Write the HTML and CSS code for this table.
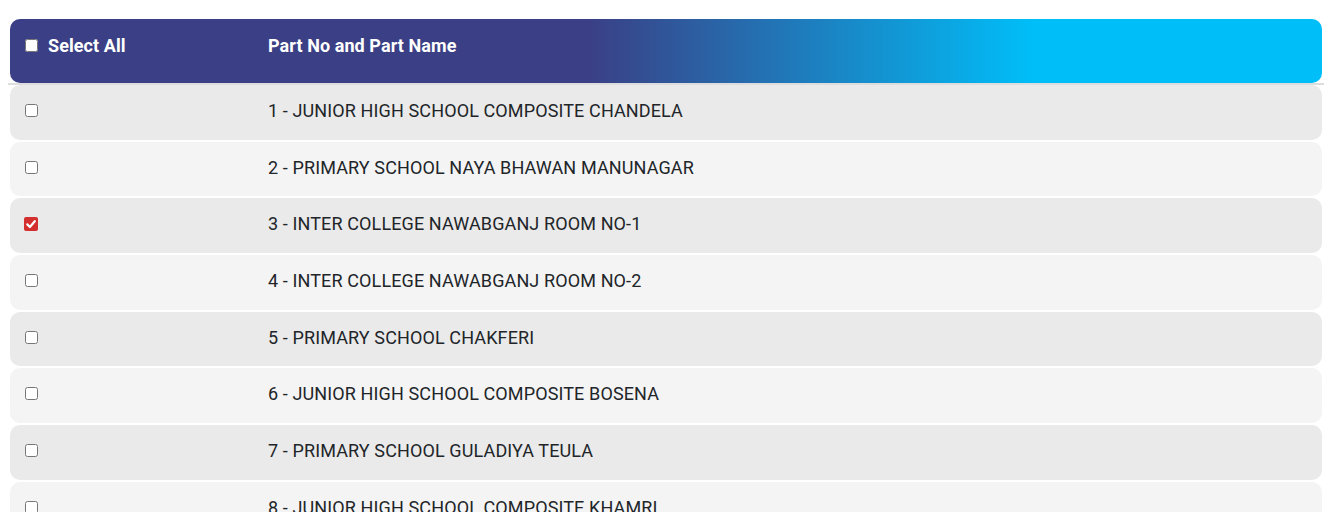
FILE: index.html
```html
<!DOCTYPE html>
<html lang="en">
<head>
<meta charset="utf-8">
<title>Parts</title>
<link rel="stylesheet" href="styles.css">
</head>
<body>
<div class="parts-table">
  <div class="row head">
    <div class="cell first"><label class="sel"><input type="checkbox" class="cb"> Select All</label></div>
    <div class="cell">Part No and Part Name</div>
  </div>
  <div class="divider"></div>
  <div class="rows">
    <div class="row odd"><div class="cell first"><input type="checkbox" class="cb"></div><div class="cell">1 - JUNIOR HIGH SCHOOL COMPOSITE CHANDELA</div></div>
    <div class="row even"><div class="cell first"><input type="checkbox" class="cb"></div><div class="cell">2 - PRIMARY SCHOOL NAYA BHAWAN MANUNAGAR</div></div>
    <div class="row odd"><div class="cell first"><span class="checked"><svg viewBox="0 0 14 14" width="14" height="14"><rect x="0" y="0" width="14" height="14" rx="2" fill="#d32f2f"/><path d="M3.3 7.4 L5.9 10 L10.8 4.2" fill="none" stroke="#fff" stroke-width="2.2" stroke-linecap="round" stroke-linejoin="round"/></svg></span></div><div class="cell">3 - INTER COLLEGE NAWABGANJ ROOM NO-1</div></div>
    <div class="row even"><div class="cell first"><input type="checkbox" class="cb"></div><div class="cell">4 - INTER COLLEGE NAWABGANJ ROOM NO-2</div></div>
    <div class="row odd"><div class="cell first"><input type="checkbox" class="cb"></div><div class="cell">5 - PRIMARY SCHOOL CHAKFERI</div></div>
    <div class="row even"><div class="cell first"><input type="checkbox" class="cb"></div><div class="cell">6 - JUNIOR HIGH SCHOOL COMPOSITE BOSENA</div></div>
    <div class="row odd"><div class="cell first"><input type="checkbox" class="cb"></div><div class="cell">7 - PRIMARY SCHOOL GULADIYA TEULA</div></div>
    <div class="row even"><div class="cell first"><input type="checkbox" class="cb"></div><div class="cell">8 - JUNIOR HIGH SCHOOL COMPOSITE KHAMRI</div></div>
  </div>
</div>
</body>
</html>
```
FILE: styles.css
```css
html, body {
  margin: 0;
  padding: 0;
  background: #fff;
}
body {
  padding: 19px 8px 0 8px;
  font-family: Roboto, "Liberation Sans", Arial, sans-serif;
  font-size: 18px;
  color: #212529;
  overflow: hidden;
}
.parts-table {
  width: 1316px;
}
.row {
  display: grid;
  grid-template-columns: 246px 1fr;
  margin: 0 2px;
  border-radius: 10px;
}
.head {
  height: 64px;
  background: linear-gradient(to right, #3b3f85 44%, #00bef8 78%);
  color: #fff;
  font-weight: 700;
}
.head .cell {
  align-items: flex-start;
  padding-top: 16px;
  letter-spacing: 0.08px;
}
.sel {
  display: flex;
  align-items: center;
}
.sel .cb {
  margin: 0 10px 0 3px;
}
.divider {
  height: 2px;
  background: #dddddd;
}
.rows {
  display: flex;
  flex-direction: column;
  gap: 2px;
}
.rows .row {
  height: 54.7px;
  letter-spacing: 0.12px;
}
.odd { background: #eaeaea; }
.even { background: #f4f4f4; }
.cell {
  display: flex;
  align-items: center;
  padding: 0 12px;
  padding-bottom: 4px;
}
.head .cell { padding-bottom: 0; }
.cb {
  width: 13px;
  height: 13px;
  margin: 0 0 0 3px;
}
.checked {
  display: inline-flex;
  margin-left: 2px;
}
```
